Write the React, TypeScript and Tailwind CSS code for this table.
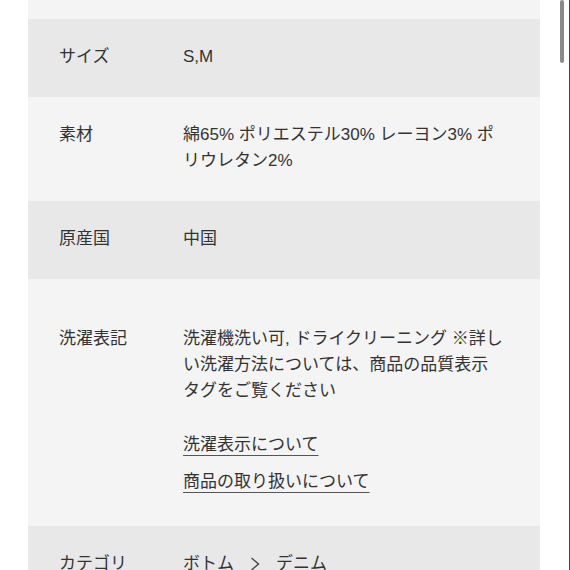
const font = {
  fontFamily: '"Liberation Sans", "Noto Sans CJK JP", sans-serif',
};

function Row({
  label,
  dark,
  className,
  children,
}: {
  label: string;
  dark?: boolean;
  className?: string;
  children: React.ReactNode;
}) {
  return (
    <div
      className={`flex pl-[31px] pr-[28px] ${dark ? "bg-[#e8e8e8]" : "bg-[#f4f4f4]"} ${className ?? "pt-[25px] pb-[27px]"}`}
    >
      <div className="w-[124px] shrink-0">{label}</div>
      <div className="flex-1">{children}</div>
    </div>
  );
}

export default function App() {
  return (
    <div
      className="relative h-[570px] w-[570px] overflow-hidden bg-white text-[17px] leading-[26px] text-[#333]"
      style={font}
    >
      <div className="ml-[28px] w-[512px]">
        <div className="h-[19px] bg-[#f4f4f4]" />

        <Row label="サイズ" dark>
          S,M
        </Row>

        <Row label="素材">
          <div>綿65% ポリエステル30% レーヨン3% ポ</div>
          <div>リウレタン2%</div>
        </Row>

        <Row label="原産国" dark>
          中国
        </Row>

        <Row label="洗濯表記" className="pt-[47px] pb-[31px]">
          <div>洗濯機洗い可, ドライクリーニング ※詳し</div>
          <div>い洗濯方法については、商品の品質表示</div>
          <div>タグをご覧ください</div>
          <div className="mt-[28px]">
            <a className="underline underline-offset-[5px] decoration-[#555]">
              洗濯表示について
            </a>
          </div>
          <div className="mt-[11px]">
            <a className="underline underline-offset-[5px] decoration-[#555]">
              商品の取り扱いについて
            </a>
          </div>
        </Row>

        <Row label="カテゴリ" dark className="pt-[25px] pb-[26px]">
          <div className="flex items-center">
            <span>ボトム</span>
            <svg
              width="10"
              height="16"
              viewBox="0 0 10 16"
              className="mx-[16px]"
              fill="none"
              stroke="#444"
              strokeWidth="1.4"
            >
              <path d="M1.5 2 L8.5 8 L1.5 14" />
            </svg>
            <span>デニム</span>
          </div>
        </Row>
      </div>

      {/* scrollbar + window edge */}
      <div className="absolute left-[560px] top-0 h-[63px] w-[4px] rounded-[2px] bg-[#8a8a8a]" />
      <div className="absolute right-0 top-0 h-full w-[1px] bg-[#444]" />
    </div>
  );
}
